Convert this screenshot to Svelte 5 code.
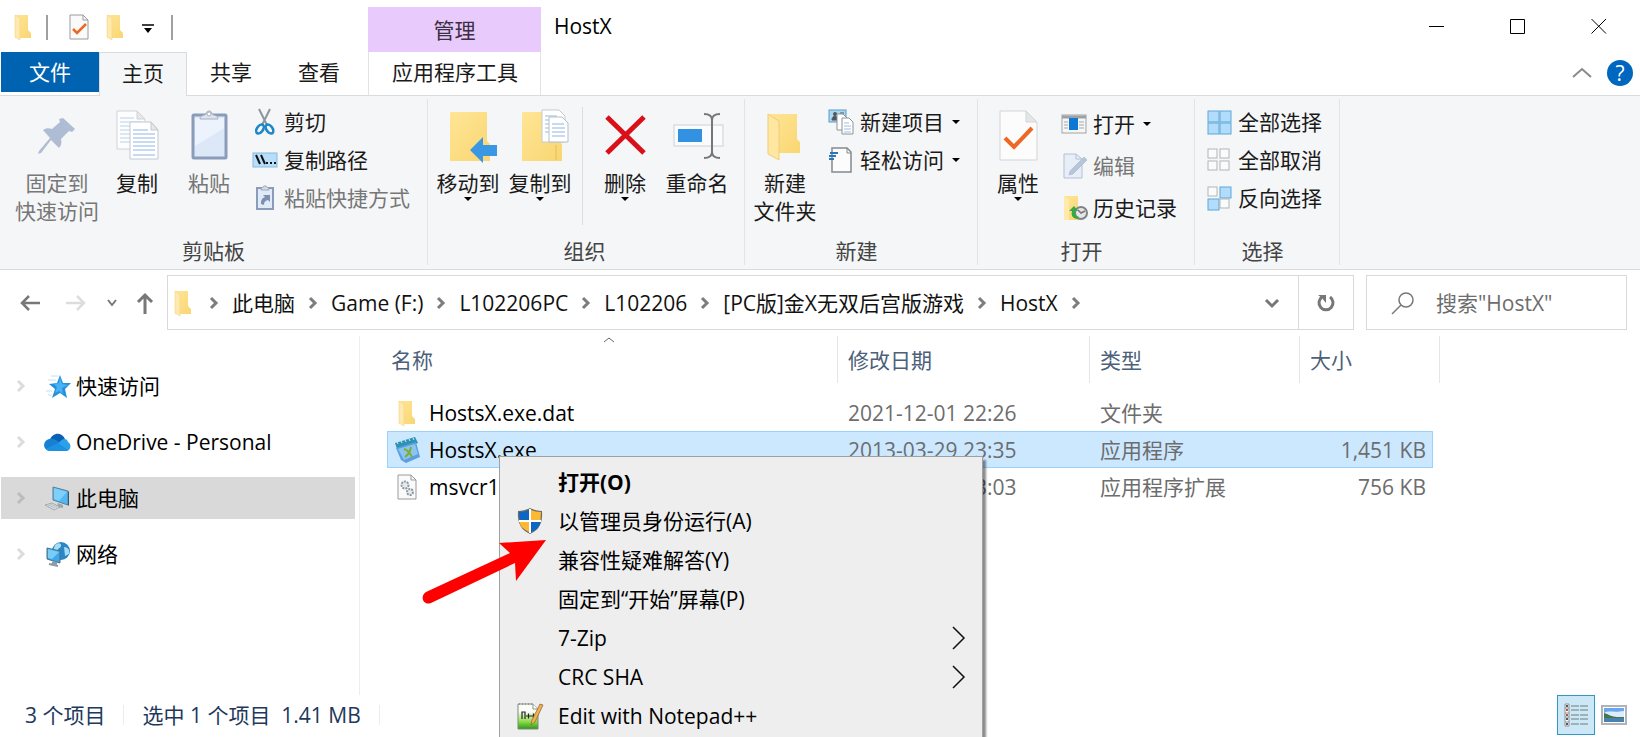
<script lang="ts">
  type Command = { label: string; icon: string; disabled?: boolean; menu?: boolean };
  type Group = { name: string; big: Command[][]; small: Command[]; roomy?: boolean };

  const groups: Group[] = [
    {
      name: '剪贴板',
      big: [[
        { label: '固定到\n快速访问', icon: 'pin', disabled: true },
        { label: '复制', icon: 'copy' },
        { label: '粘贴', icon: 'paste', disabled: true }
      ]],
      small: [
        { label: '剪切', icon: 'cut' },
        { label: '复制路径', icon: 'path' },
        { label: '粘贴快捷方式', icon: 'shortcut', disabled: true }
      ]
    },
    {
      name: '组织',
      big: [
        [
          { label: '移动到', icon: 'moveto', menu: true },
          { label: '复制到', icon: 'copyto', menu: true }
        ],
        [
          { label: '删除', icon: 'delete', menu: true },
          { label: '重命名', icon: 'rename' }
        ]
      ],
      small: []
    },
    {
      name: '新建',
      big: [[{ label: '新建\n文件夹', icon: 'newfolder' }]],
      small: [
        { label: '新建项目', icon: 'newitem', menu: true },
        { label: '轻松访问', icon: 'easy', menu: true }
      ]
    },
    {
      name: '打开',
      big: [[{ label: '属性', icon: 'props', menu: true }]],
      small: [
        { label: '打开', icon: 'open', menu: true },
        { label: '编辑', icon: 'edit', disabled: true },
        { label: '历史记录', icon: 'history' }
      ],
      roomy: true
    },
    {
      name: '选择',
      big: [],
      small: [
        { label: '全部选择', icon: 'selall' },
        { label: '全部取消', icon: 'selnone' },
        { label: '反向选择', icon: 'selinv' }
      ]
    }
  ];

  const crumbs = ['此电脑', 'Game (F:)', 'L102206PC', 'L102206', '[PC版]金X无双后宫版游戏', 'HostX'];

  const places = [
    { label: '快速访问', icon: 'star' },
    { label: 'OneDrive - Personal', icon: 'cloud' },
    { label: '此电脑', icon: 'pc' },
    { label: '网络', icon: 'network' }
  ];

  const files = [
    { name: 'HostsX.exe.dat', date: '2021-12-01 22:26', type: '文件夹', size: '', icon: 'folder' },
    { name: 'HostsX.exe', date: '2013-03-29 23:35', type: '应用程序', size: '1,451 KB', icon: 'hostsx' },
    { name: 'msvcr100.dll', date: '2011-02-19 23:03', type: '应用程序扩展', size: '756 KB', icon: 'dll' }
  ];

  const menuItems = [
    { label: '打开(O)', bold: true },
    { label: '以管理员身份运行(A)', icon: 'shield' },
    { label: '兼容性疑难解答(Y)' },
    { label: '固定到“开始”屏幕(P)' },
    { label: '7-Zip', sub: true },
    { label: 'CRC SHA', sub: true },
    { label: 'Edit with Notepad++', icon: 'npp' }
  ];

  let currentPlace = $state('此电脑');
  let selectedFile = $state('HostsX.exe');
  let query = $state('');
</script>

{#snippet bigIcon(name: string)}
  <svg class="big-icon" viewBox="0 0 50 50" aria-hidden="true">
    {#if name === 'pin'}
      <path d="M31 8l12 11-3 3-3-1-8 8c1 4 0 7-2 9l-8-8L9 43l-3 1 1-3 11-13-7-8c3-2 6-2 9-1l8-7-1-3z" fill="#aebdd3" />
    {:else if name === 'copy'}
      <path d="M5 1h20l8 8v30H5z" fill="#fdfdfe" stroke="#cfd3d8" />
      <path d="M8 8h14M8 12h22M8 16h22M8 20h10M8 24h10M8 28h10M8 32h10" stroke="#dbe7f5" stroke-width="2" />
      <path d="M25 1v8h8z" fill="#e6e8ea" stroke="#cfd3d8" />
      <path d="M18 12h21l7 8v29H18z" fill="#fff" stroke="#c3c8cf" />
      <path d="M21 20h15M21 24h22M21 28h22M21 32h22M21 36h22M21 40h22M21 45h22" stroke="#c6daf3" stroke-width="2" />
      <path d="M39 12v8h7z" fill="#e6e8ea" stroke="#c3c8cf" />
    {:else if name === 'paste'}
      <rect x="9" y="5" width="33" height="43" rx="1" fill="#dce8f8" stroke="#8b9cbb" stroke-width="3" />
      <path d="M11 8h29v10L11 36z" fill="#edf3fc" />
      <path d="M16 9c0-4 4-3 6-5 0-4 6-4 6 0 2 2 6 1 6 5z" fill="#dfe4ec" stroke="#a5b0c3" />
      <circle cx="25" cy="4" r="2" fill="#fff" stroke="#a5b0c3" />
    {:else if name === 'moveto' || name === 'copyto'}
      <path d="M7 2h37v29l3 3v17H7z" fill="url(#folderFace)" />
      {#if name === 'moveto'}
        <path d="M27 40l13-13v8h14v11H40v7z" fill="#3a97e4" />
      {:else}
        <path d="M41 35v15" stroke="#e5bd5a" />
        <path d="M27 0h17l6 6v26H27z" fill="#fff" stroke="#c3cbd5" />
        <path d="M30 6h12M30 10h12M30 14h8M30 18h8M30 22h8" stroke="#cbdcf1" stroke-width="2" />
        <path d="M34 7h13l6 6v19H34z" fill="#fff" stroke="#b5bfca" />
        <path d="M37 14h12M37 18h13M37 22h13M37 26h13" stroke="#c6daf3" stroke-width="2" />
      {/if}
    {:else if name === 'delete'}
      <path d="M7 7l37 36M44 7L7 43" stroke="#d90f19" stroke-width="5" />
    {:else if name === 'rename'}
      <rect x="2" y="15" width="49" height="21" fill="#fafbfc" stroke="#cdd0d4" />
      <rect x="6" y="19" width="24" height="13" fill="#3391e2" />
      <path d="M32 4c6 0 8 2 8 6v32c0 4-2 6-8 6M48 4c-6 0-8 2-8 6v32c0 4 2 6 8 6" fill="none" stroke="#777" stroke-width="2" />
    {:else if name === 'newfolder'}
      <path d="M8 4h29v25l3 3v11H8z" fill="url(#folderFace)" />
      <path d="M8 4l11 7v39L8 44z" fill="#ffe7a1" stroke="#f0cd76" stroke-width="1" />
    {:else if name === 'props'}
      <path d="M7 1h26l11 11v38H7z" fill="#fcfcfd" stroke="#d2d4d7" />
      <path d="M33 1v11h11z" fill="#e3e5e7" stroke="#d2d4d7" />
      <path d="M12 28l9 9 18-19" fill="none" stroke="#ee6723" stroke-width="4" />
    {/if}
  </svg>
{/snippet}

{#snippet icon(name: string)}
  <svg class="icon" viewBox="0 0 26 26" aria-hidden="true">
    {#if name === 'folder'}
      <path d="M5 1h13v15l3 3v5H5z" fill="url(#folderFace)" />
      <path d="M5 1l5 3v22l-5-3z" fill="#ffe9ac" stroke="#f3d487" stroke-width=".6" />
    {:else if name === 'check'}
      <path d="M4 1h13l5 5v19H4z" fill="#fafafa" stroke="#9a9a9a" />
      <path d="M17 1v5h5" fill="none" stroke="#9a9a9a" />
      <path d="M7 15l4 4 9-9" fill="none" stroke="#ee6723" stroke-width="2.5" />
    {:else if name === 'cut'}
      <path d="M7 0l8 16M18 0l-8 16" stroke="#8d969f" stroke-width="2" />
      <ellipse cx="8" cy="20" rx="3" ry="5" transform="rotate(35 8 20)" fill="none" stroke="#1f86c9" stroke-width="2.6" />
      <ellipse cx="17.5" cy="20" rx="3" ry="5" transform="rotate(-35 17.5 20)" fill="none" stroke="#1f86c9" stroke-width="2.6" />
    {:else if name === 'path'}
      <rect x="1" y="6" width="24" height="14" fill="#b5defb" stroke="#8ab8d8" />
      <path d="M4 8l4 9M9 8l4 9" stroke="#111" stroke-width="2" />
      <path d="M14 16h2M18 16h2M22 16h2" stroke="#111" stroke-width="2" />
    {:else if name === 'shortcut'}
      <rect x="5" y="3" width="16" height="21" fill="#e1eaf7" stroke="#8b9cbb" stroke-width="2" />
      <path d="M9 5c0-3 2-2 3-4h2c1 2 3 1 3 4z" fill="#d4dbe7" stroke="#9ba8be" />
      <path d="M9 19c0-4 1-6 4-7l-2-2h7v7l-2-2c-3 1-4 2-4 5z" fill="#7d90b3" />
    {:else if name === 'newitem'}
      <rect x="1" y="1" width="17" height="12" fill="#a9d8f3" stroke="#5b9bc4" />
      <circle cx="7" cy="5" r="2" fill="#52565c" /><path d="M4 11c0-5 6-5 6 0zM12 4h4" fill="#52565c" stroke="#52565c" />
      <path d="M9 5h6l4 4v12H9z" fill="#fff" stroke="#8f9499" />
      <path d="M14 9h7l4 4v12H14z" fill="#fff" stroke="#8f9499" />
      <path d="M16 14h5M16 17h7M16 20h7M16 23h7" stroke="#9fbfe6" />
    {:else if name === 'easy'}
      <path d="M4 1h15l4 4v20H4z" fill="#fcfcfc" stroke="#85898d" stroke-width="1.5" />
      <path d="M19 1v5h4" fill="none" stroke="#85898d" />
      <path d="M2 6h8M1 9h7M1 12h5" stroke="#2b76b3" stroke-width="2" />
    {:else if name === 'open'}
      <rect x="1" y="4" width="24" height="18" fill="#f6f6f6" stroke="#a0a3a5" />
      <path d="M1 6h24" stroke="#9da1a4" stroke-width="3" />
      <path d="M3 11h4M3 14h4M3 17h4M18 11h5M18 14h5M18 17h5" stroke="#a4a7aa" />
      <rect x="8" y="7" width="9" height="12" fill="#0a78d4" />
    {:else if name === 'edit'}
      <path d="M3 1h12l6 5v19H3z" fill="#e7eef8" stroke="#b4c0d2" />
      <path d="M15 1v5h6" fill="none" stroke="#b4c0d2" />
      <path d="M8 22l1-4L23 4l3 3-14 14z" fill="#b7c5da" stroke="#9fb0c9" stroke-width=".5" />
    {:else if name === 'history'}
      <path d="M3 1h14v14l2 3v7H3z" fill="url(#folderFace)" />
      <path d="M3 1l5 3v21H3z" fill="#ffe9ac" />
      <circle cx="20" cy="18" r="6" fill="#e3e5e6" stroke="#7e8386" stroke-width="2" />
      <path d="M17 15l3 3 4-2" fill="none" stroke="#777" stroke-width="1.5" />
      <path d="M16 24c-5-1-6-4-5-8H8l5-5 4 5h-3c0 4 1 5 4 6z" fill="#36a844" />
    {:else if name === 'selall' || name === 'selnone' || name === 'selinv'}
      {#each [[2, 2], [14, 2], [2, 14], [14, 14]] as [x, y], i}
        {@const on = name === 'selall' || (name === 'selinv' && (i === 1 || i === 2))}
        <rect {x} {y} width={on ? 11 : 9} height={on ? 11 : 9} fill={on ? '#b2dcfb' : '#fafbfb'} stroke={on ? '#5fa7d8' : '#b2b5b7'} />
      {/each}
    {:else if name === 'star'}
      <path d="M16 2l3 8 8 0-6 6 2 9-7-5-8 5 3-9-6-5 8-1z" fill="#2491dd" />
      <path d="M16 4l2 7 6 1-6 3 1 6-4-3-4 2 2-6-3-3 5-1z" fill="#45b3f5" />
      <path d="M7 3h7M4 7h8M2 18h6M4 22h4" stroke="#bfe2f8" />
    {:else if name === 'cloud'}
      <path d="M6 11c2-7 11-9 15-1l-6 4-6-3z" fill="#0a60b5" />
      <path d="M5 10c4-1 7 1 12 4L3 21c-5-3-3-10 2-11z" fill="#1681d2" />
      <path d="M15 14c3-5 8-5 9-1 4 2 3 9-2 9H6l-4-2z" fill="#2ba1ea" />
      <path d="M2 20l12-6 10 7c-1 1-2 1-3 1H6c-1 0-3 0-4-2z" fill="#1b91df" />
    {:else if name === 'pc'}
      <path d="M9 2l15 4v14L9 15z" fill="#4fb8f5" stroke="#5c7f96" />
      <path d="M10 3l13 4-8 9-5-2z" fill="#7ed0fb" />
      <path d="M24 6l1 1v14l-1-1z" fill="#39566b" />
      <path d="M14 18l5 2v3l-6-1z" fill="#9aa7b0" />
      <path d="M1 20l7-2 8 4-6 3z" fill="#d9dfe3" stroke="#8b979f" stroke-width=".7" />
      <path d="M4 20l7 3M6 19l7 3" stroke="#9aa7b0" stroke-width=".6" />
    {:else if name === 'network'}
      <circle cx="17" cy="10" r="9" fill="#2c86c4" />
      <path d="M11 4c3-3 7-2 6 1s-4 2-3 5-3 3-5 0zM20 6c4 0 6 3 5 7l-4 2z" fill="#a6dcf4" />
      <path d="M3 7l13 3v12L3 18z" fill="#3aa8ea" stroke="#4b6e87" />
      <path d="M4 8l11 3-7 7-4-1z" fill="#79cbf8" />
      <path d="M9 20l4 1v3l-6-1z" fill="#8d9aa3" />
      <path d="M5 23l9 2" stroke="#8d9aa3" stroke-width="2" />
    {:else if name === 'hostsx'}
      <path d="M1 6l20-6 3 6-21 6z" fill="#2d92b4" />
      <path d="M3 5l1 2M7 4l1 2M11 3l1 2M15 2l1 2M19 1l1 2" stroke="#d2eef5" />
      <path d="M2 11l20-6 4 15-14 6-5-3z" fill="#5a9fdf" />
      <path d="M4 12l17-5 3 10-14 6z" fill="#8bc4f0" />
      <path d="M10 12c4 1 6 4 8 8M17 10c-1 5-3 8-6 10" fill="none" stroke="#7fae2c" stroke-width="2" />
    {:else if name === 'dll'}
      <path d="M4 1h13l5 5v19H4z" fill="#fafafa" stroke="#9a9a9a" />
      <path d="M17 1v5h5" fill="none" stroke="#9a9a9a" />
      <circle cx="11" cy="11" r="3.5" fill="#e5eaee" stroke="#8d989f" stroke-width="2" stroke-dasharray="2 1" />
      <circle cx="16" cy="18" r="3" fill="#e5eaee" stroke="#8d989f" stroke-width="2" stroke-dasharray="2 1" />
    {:else if name === 'shield'}
      <path d="M13 0c4 2 8 3 12 3 1 12-3 19-12 23C4 22 0 15 1 3c4 0 8-1 12-3z" fill="#6d6d68" />
      <path d="M12 2v10H2.5L2 4c4 0 7-1 10-2z" fill="#0d66c2" />
      <path d="M14 2c3 1 6 2 10 2l-.5 8H14z" fill="#fdb933" />
      <path d="M2.5 14H12v10c-6-3-9-6-9.500-10z" fill="#fdb933" />
      <path d="M14 14h9.500c-1 5-4 8-9.500 10z" fill="#0d66c2" />
      <path d="M13 1v24M2 13h22" stroke="#fff" stroke-width="2" />
    {:else if name === 'npp'}
      <path d="M1 1h15l5 5v20H1z" fill="url(#notepad)" stroke="#7a8a78" />
      <path d="M2 1h15" stroke="#999" stroke-dasharray="1 2" stroke-width="2" />
      <path d="M16 1v5h5" fill="#fff" stroke="#8a9488" />
      <path d="M5 16V9h3v7M9 13h5M11.500 10.500v5M14 13h5M16.500 10.500v5" fill="none" stroke="#222" stroke-width="1.200" />
      <path d="M23 1l3 1-8 17-4 3 1-5z" fill="#efb24e" stroke="#96683a" stroke-width=".8" />
    {/if}
  </svg>
{/snippet}

{#snippet chevron()}
  <svg class="chevron" viewBox="0 0 10 14" aria-hidden="true">
    <path d="M2 2l5 5-5 5" fill="none" stroke="currentColor" stroke-width="3" />
  </svg>
{/snippet}

<svg class="defs" aria-hidden="true">
  <defs>
    <linearGradient id="folderFace" x1="0" y1="0" x2="1" y2="1">
      <stop offset="0" stop-color="#ffe596" />
      <stop offset="1" stop-color="#f9d672" />
    </linearGradient>
    <linearGradient id="notepad" x1="0" y1="0" x2="0" y2="1">
      <stop offset="0.3" stop-color="#fbfdf8" />
      <stop offset="0.7" stop-color="#8fdc4a" />
      <stop offset="1" stop-color="#2a9a18" />
    </linearGradient>
  </defs>
</svg>

<div class="window">
  <header class="titlebar">
    <div class="quick">
      {@render icon('folder')}
      <span class="bar"></span>
      <button type="button" aria-label="属性">{@render icon('check')}</button>
      <button type="button" aria-label="新建文件夹">{@render icon('folder')}</button>
      <button type="button" class="customize" aria-label="自定义快速访问工具栏">
        <svg width="12" height="10" viewBox="0 0 12 10"><path d="M0 1h12" stroke="#000" stroke-width="1.5" /><path d="M2 4h8L6 9z" /></svg>
      </button>
      <span class="bar"></span>
    </div>
    <div class="context-title">管理</div>
    <h1>HostX</h1>
    <div class="controls">
      <button type="button" aria-label="最小化"><svg viewBox="0 0 16 16"><path d="M0 8.500h15" /></svg></button>
      <button type="button" aria-label="最大化"><svg viewBox="0 0 16 16"><path d="M.5 1.500h14v14H.5z" /></svg></button>
      <button type="button" aria-label="关闭"><svg viewBox="0 0 16 16"><path d="M.5 1l14.500 14.500M15 1L.5 15.500" /></svg></button>
    </div>
  </header>

  <div class="tabs">
    <div class="main-tabs">
      <button type="button" class="tab file">文件</button>
      <button type="button" class="tab active">主页</button>
      <button type="button" class="tab">共享</button>
      <button type="button" class="tab">查看</button>
    </div>
    <button type="button" class="tab context">应用程序工具</button>
    <div class="tab-tools">
      <button type="button" aria-label="最小化功能区">
        <svg width="20" height="11" viewBox="0 0 20 11"><path d="M1 10l9-8 9 8" fill="none" stroke="#8a8a8a" stroke-width="2" /></svg>
      </button>
      <button type="button" class="help" aria-label="帮助">?</button>
    </div>
  </div>

  <div class="ribbon">
    {#each groups as group}
      <section class="group">
        <div class="commands">
          {#each group.big as set, i}
            {#if i > 0}<span class="divider"></span>{/if}
            {#each set as cmd}
              <button type="button" class="big" disabled={cmd.disabled}>
                {@render bigIcon(cmd.icon)}
                <span class="big-label">{cmd.label}</span>
                {#if cmd.menu}<span class="arrow"></span>{/if}
              </button>
            {/each}
          {/each}
          {#if group.small.length}
            <div class="small-list" class:roomy={group.roomy}>
              {#each group.small as cmd}
                <button type="button" class="small" disabled={cmd.disabled}>
                  {@render icon(cmd.icon)}
                  <span>{cmd.label}</span>
                  {#if cmd.menu}<span class="arrow"></span>{/if}
                </button>
              {/each}
            </div>
          {/if}
        </div>
        <div class="group-name">{group.name}</div>
      </section>
    {/each}
  </div>

  <div class="address-row">
    <div class="history">
      <button type="button" aria-label="后退"><svg width="22" height="18" viewBox="0 0 22 18"><path d="M21 9H3M10 2L3 9l7 7" fill="none" stroke="#777" stroke-width="2.500" /></svg></button>
      <button type="button" aria-label="前进" disabled><svg width="22" height="18" viewBox="0 0 22 18"><path d="M1 9h18M12 2l7 7-7 7" fill="none" stroke="#ddd" stroke-width="2.500" /></svg></button>
      <button type="button" aria-label="最近浏览的位置"><svg width="10" height="8" viewBox="0 0 10 8"><path d="M1 1l4 5 4-5" fill="none" stroke="#777" stroke-width="2" /></svg></button>
      <button type="button" aria-label="上移"><svg width="18" height="22" viewBox="0 0 18 22"><path d="M9 22V3M2 10l7-7 7 7" fill="none" stroke="#777" stroke-width="3" /></svg></button>
    </div>
    <nav class="address" aria-label="地址">
      {@render icon('folder')}
      {#each crumbs as crumb}
        {@render chevron()}
        <button type="button">{crumb}</button>
      {/each}
      {@render chevron()}
      <button type="button" class="drop" aria-label="以前的位置"><svg width="16" height="12" viewBox="0 0 16 12"><path d="M2 3l6 6 6-6" fill="none" stroke="#777" stroke-width="3" /></svg></button>
      <button type="button" class="refresh" aria-label="刷新">
        <svg width="18" height="18" viewBox="0 0 18 18"><path d="M13 3a7 7 0 1 1-8 0" fill="none" stroke="#777" stroke-width="3" /><path d="M1 1h8v8L6.500 6 5 4z" fill="#777" /></svg>
      </button>
    </nav>
    <label class="search">
      <svg width="24" height="24" viewBox="0 0 24 24" aria-hidden="true"><circle cx="15" cy="9" r="7" fill="none" stroke="#777" stroke-width="1.500" /><path d="M10 14l-9 9" stroke="#777" stroke-width="1.500" /></svg>
      <input type="text" bind:value={query} placeholder={'搜索"HostX"'} aria-label="搜索" />
    </label>
  </div>

  <div class="body">
    <nav class="places">
      {#each places as place}
        <button type="button" class="place" class:current={place.label === currentPlace} onclick={() => (currentPlace = place.label)}>
          {@render chevron()}
          {@render icon(place.icon)}
          <span>{place.label}</span>
        </button>
      {/each}
    </nav>
    <main class="files">
      <table>
        <colgroup>
          <col class="c-name" /><col class="c-date" /><col class="c-type" /><col class="c-size" /><col class="c-end" />
        </colgroup>
        <thead>
          <tr>
            <th class="sorted">
              名称
              <svg class="sort" width="12" height="6" viewBox="0 0 12 6" aria-hidden="true"><path d="M1 5l5-4 5 4" fill="none" stroke="#666" /></svg>
            </th>
            <th>修改日期</th>
            <th>类型</th>
            <th class="size-head">大小</th>
            <th class="end"></th>
          </tr>
        </thead>
        <tbody>
          {#each files as file}
            <tr class:selected={file.name === selectedFile} onclick={() => (selectedFile = file.name)}>
              <td class="name"><div>{@render icon(file.icon)}<span>{file.name}</span></div></td>
              <td>{file.date}</td>
              <td>{file.type}</td>
              <td class="size">{file.size}</td>
            </tr>
          {/each}
        </tbody>
      </table>
    </main>
  </div>

  <footer class="status">
    <span class="count">3 个项目</span>
    <span class="count">选中 1 个项目&nbsp; 1.41 MB</span>
    <div class="views">
      <button type="button" class="view on" aria-label="详细信息">
        <svg width="24" height="24" viewBox="0 0 24 24">
          <path d="M1 1h4v22H1z" fill="#fff" stroke="#8a9296" />
          <path d="M1 5h4M1 10h4M1 14h4M1 19h4" stroke="#8a9296" />
          <path d="M2 3h2M2 16h2M2 21h2" stroke="#555" stroke-width="2" />
          <path d="M2 7h2M2 12h2" stroke="#bb5647" stroke-width="2" />
          <path d="M7 3h8M16 3h8M7 7h8M16 7h8M7 12h8M16 12h8M7 16h8M16 16h8M7 21h8M16 21h8" stroke="#6d7a7f" />
        </svg>
      </button>
      <button type="button" class="view" aria-label="大图标">
        <svg width="26" height="20" viewBox="0 0 26 20">
          <path d="M1 1h24v18H1z" fill="#fff" stroke="#b0b3ba" stroke-width="2" />
          <path d="M3 3h20v14H3z" fill="#6ba6f0" />
          <path d="M3 8c5-3 9 0 20-2v6H3z" fill="#dcecfb" />
          <path d="M3 8c4 1 8 4 13 4h7v1H3z" fill="#40784a" />
          <path d="M3 13h20v4H3z" fill="#4b7fae" />
        </svg>
      </button>
    </div>
  </footer>

  <div class="menu" role="menu">
    {#each menuItems as item}
      <button type="button" role="menuitem" class:bold={item.bold}>
        <span class="menu-icon">{#if item.icon}{@render icon(item.icon)}{/if}</span>
        <span>{item.label}</span>
        {#if item.sub}
          <svg class="sub" width="14" height="24" viewBox="0 0 14 24" aria-hidden="true"><path d="M1 1l11 11L1 23" fill="none" stroke="#111" stroke-width="1.500" /></svg>
        {/if}
      </button>
    {/each}
  </div>

  <svg class="pointer" width="126" height="68" viewBox="0 0 126 68" aria-hidden="true">
    <path d="M125 2L78 5l11 10L5 54c-7 5-2 14 5 11l84-40 1 18z" fill="#fe0000" />
  </svg>
</div>

<style>
  :global(body) {
    background: #fff;
  }

  .window {
    position: relative;
    display: flex;
    flex-direction: column;
    height: 100vh;
    overflow: hidden;
    background: #fff;
    color: #1a1a1a;
    font-family: "Open Sans", "Noto Sans CJK SC", sans-serif;
    font-size: 21px;
    line-height: 28px;
    --context-left: 368px;
    --context-width: 173px;
  }

  button,
  input {
    font: inherit;
    color: inherit;
    background: none;
    border: 0;
    padding: 0;
    margin: 0;
    white-space: nowrap;
  }

  svg {
    display: block;
    flex: none;
    overflow: visible;
  }

  .defs {
    position: absolute;
    width: 0;
    height: 0;
  }

  .icon {
    width: 26px;
    height: 26px;
  }

  .titlebar {
    display: flex;
    height: 52px;
    flex: none;
  }

  .quick {
    display: flex;
    align-items: center;
    gap: 10px;
    width: var(--context-left);
    padding: 2px 0 0 10px;
    box-sizing: border-box;
  }

  .bar {
    width: 2px;
    height: 25px;
    background: #a0a0a0;
  }

  .quick .bar + button {
    margin-left: 8px;
  }

  .customize {
    padding: 4px 7px 0 4px;
  }

  .context-title {
    width: var(--context-width);
    box-sizing: border-box;
    margin-top: 7px;
    padding-top: 9px;
    background: #e9cafc;
    text-align: center;
    color: #3b2f42;
  }

  h1 {
    flex: 1;
    margin: 0;
    padding-left: 13px;
    font-size: 21px;
    font-weight: 400;
    line-height: 52px;
    color: #000;
  }

  .controls {
    display: flex;
    padding-right: 1px;
  }

  .controls button {
    display: grid;
    place-items: center;
    width: 81px;
  }

  .controls svg {
    width: 16px;
    height: 16px;
    fill: none;
    stroke: #000;
  }

  .tabs {
    display: flex;
    height: 43px;
    flex: none;
    border-bottom: 1px solid #d9dbdc;
  }

  .main-tabs {
    display: flex;
    align-items: flex-start;
    width: var(--context-left);
  }

  .tab {
    height: 43px;
    padding: 0 23px 3px;
  }

  .tab.file {
    height: 40px;
    padding: 0 28px;
    margin-left: 1px;
    background: #0063b1;
    color: #fff;
  }

  .tab.active {
    height: 44px;
    padding: 0 22px 4px;
    background: #f5f6f7;
    border: 1px solid #d9dbdc;
    border-bottom: 0;
    box-sizing: border-box;
  }

  .tab.context {
    width: var(--context-width);
    box-sizing: border-box;
    border: solid #e3e3e3;
    border-width: 0 1px;
  }

  .tab-tools {
    display: flex;
    align-items: center;
    gap: 15px;
    margin-left: auto;
    padding: 0 7px 2px 0;
  }

  .help {
    width: 26px;
    height: 26px;
    border-radius: 50%;
    background: #0067c0;
    color: #fff;
    line-height: 26px;
  }

  .ribbon {
    display: flex;
    flex: none;
    padding: 3px 0 4px;
    background: #f5f6f7;
    border-bottom: 1px solid #d9dbdc;
  }

  .group {
    display: flex;
    flex-direction: column;
    padding: 0 17px 0 4px;
    border-right: 1px solid #e2e3e4;
  }

  .group:first-child {
    padding-left: 13px;
  }

  .group:nth-child(2) {
    padding-right: 11px;
  }

  .commands {
    display: flex;
    align-items: flex-start;
    min-height: 138px;
  }

  .group-name {
    padding-left: 4px;
    text-align: center;
    color: #444;
  }

  .big {
    display: flex;
    flex-direction: column;
    align-items: center;
    min-width: 72px;
    padding: 11px 2px 0;
  }

  .big-icon {
    width: 50px;
    height: 50px;
    margin-bottom: 9px;
  }

  .big-label {
    white-space: pre-line;
  }

  .big:disabled,
  .small:disabled {
    color: #777;
  }

  .arrow {
    border: 4px solid transparent;
    border-top-color: #000;
    border-bottom: 0;
  }

  .divider {
    width: 1px;
    height: 118px;
    margin: 8px 6px 0;
    background: #dcdddf;
  }

  .small-list {
    display: flex;
    flex-direction: column;
    padding: 4px 0 0 7px;
  }

  .small {
    display: flex;
    align-items: center;
    gap: 6px;
    height: 38px;
  }

  .roomy .small {
    height: 42px;
  }

  .small .arrow {
    margin-left: 2px;
  }

  .address-row {
    display: flex;
    flex: none;
    height: 55px;
    padding: 5px 13px 6px 19px;
  }

  .history {
    display: flex;
    align-items: center;
    gap: 20px;
    width: 148px;
  }

  .history button:nth-child(2) {
    margin-left: 4px;
  }

  .history button:last-child {
    margin-left: -1px;
  }

  .address {
    display: flex;
    align-items: center;
    flex: 1;
    padding-left: 2px;
    border: 1px solid #d9d9d9;
    color: #111;
  }

  .chevron {
    width: 10px;
    height: 14px;
    color: #7d7d7d;
  }

  .address .chevron {
    margin: 0 13px;
  }

  .drop {
    margin-left: auto;
    padding: 0 18px;
  }

  .refresh {
    display: grid;
    place-items: center;
    align-self: stretch;
    width: 55px;
    border-left: 1px solid #d9d9d9;
  }

  .search {
    display: flex;
    align-items: center;
    gap: 21px;
    width: 261px;
    margin-left: 12px;
    padding-left: 24px;
    box-sizing: border-box;
    border: 1px solid #d9d9d9;
  }

  .search input {
    flex: 1;
    min-width: 0;
    outline: 0;
  }

  .search input::placeholder {
    color: #6d6d6d;
    opacity: 1;
  }

  .body {
    display: flex;
    flex: 1;
    min-height: 0;
  }

  .places {
    display: flex;
    flex-direction: column;
    gap: 14px;
    width: 360px;
    padding: 29px 4px 0 1px;
    box-sizing: border-box;
    border-right: 1px solid #ededed;
  }

  .place {
    display: flex;
    align-items: center;
    height: 42px;
    padding-left: 15px;
    color: #000;
  }

  .place .icon {
    margin: 0 6px 0 18px;
  }

  .place .chevron {
    color: #dcdcdc;
  }

  .place.current {
    background: #d9d9d9;
  }

  .place.current .chevron {
    color: #bcbcbc;
  }

  .files {
    flex: 1;
    min-width: 0;
    padding-left: 27px;
  }

  table {
    width: 1053px;
    table-layout: fixed;
    border-collapse: separate;
    border-spacing: 0;
  }

  .c-name { width: 451px; }
  .c-date { width: 252px; }
  .c-type { width: 210px; }
  .c-size { width: 133px; }
  .c-end { width: 7px; }

  th {
    height: 47px;
    padding: 0 0 0 10px;
    box-sizing: border-box;
    border-right: 1px solid #e5e5e5;
    font-weight: 400;
    text-align: left;
    color: #4c607a;
  }

  th.sorted {
    position: relative;
    padding-left: 4px;
  }

  th.size-head {
    border-right: 0;
  }

  th.end {
    padding: 0;
  }

  .sort {
    position: absolute;
    top: 1px;
    left: 48%;
  }

  tbody::before {
    content: "";
    display: block;
    height: 11px;
  }

  td {
    height: 37px;
    padding: 0 0 0 10px;
    box-sizing: border-box;
    border: solid transparent;
    border-width: 1px 0;
    line-height: 34px;
    color: #6d6d6d;
  }

  td.name {
    color: #000;
    border-left-width: 1px;
    padding-left: 6px;
  }

  td.name div {
    display: flex;
    align-items: center;
    gap: 9px;
  }

  td.size {
    padding-right: 6px;
    border-right-width: 1px;
    text-align: right;
  }

  .selected td {
    background: #cce8ff;
    border-color: #99d1ff;
  }

  .status {
    display: flex;
    align-items: center;
    flex: none;
    height: 40px;
    padding: 0 7px 2px 25px;
    color: #1e395b;
  }

  .count {
    padding-right: 18px;
    margin-right: 18px;
    border-right: 1px solid #ececec;
    line-height: 20px;
  }

  .views {
    display: flex;
    margin-left: auto;
  }

  .view {
    display: grid;
    place-items: center;
    width: 38px;
    height: 40px;
  }

  .view.on {
    background: #cce8f6;
    border: 1px solid #3399c4;
    box-sizing: border-box;
  }

  .menu {
    position: absolute;
    top: 456px;
    left: 499px;
    width: 484px;
    padding: 5px 2px;
    box-sizing: border-box;
    border: 1px solid #a0a0a0;
    background: #eee;
    box-shadow: 3px 4px 2px rgba(0, 0, 0, 0.45);
    color: #000;
  }

  .menu button {
    display: flex;
    align-items: center;
    width: 100%;
    height: 39px;
  }

  .menu-icon {
    width: 41px;
    padding-left: 15px;
  }

  .menu .bold {
    font-weight: 700;
  }

  .menu .sub {
    margin-left: auto;
    margin-right: 14px;
  }

  .pointer {
    position: absolute;
    top: 538px;
    left: 421px;
  }
</style>
